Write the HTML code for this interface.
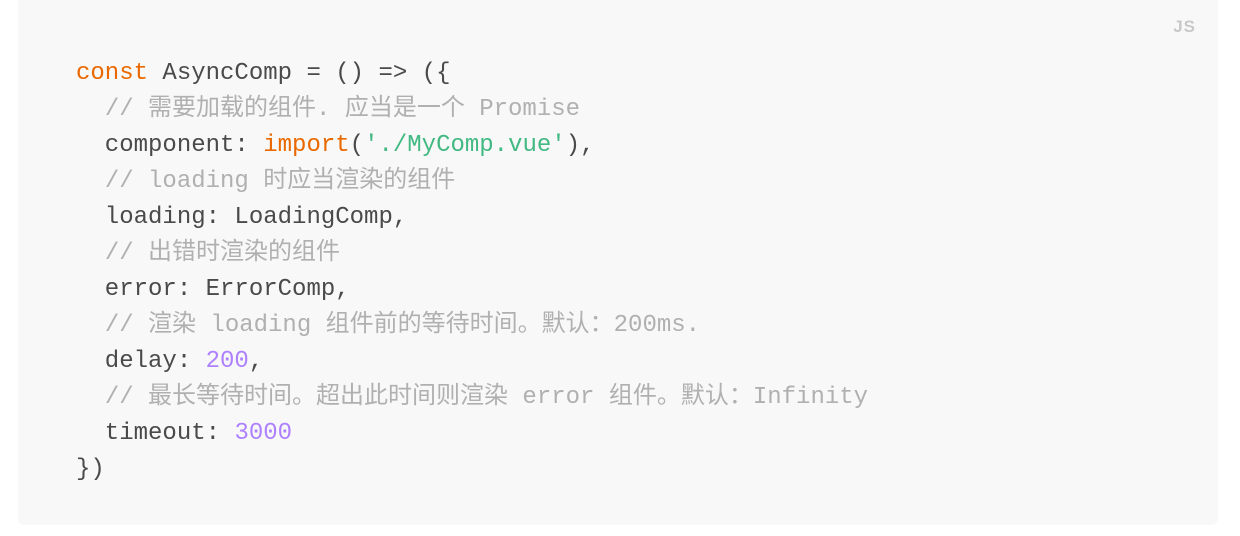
<!DOCTYPE html>
<html><head><meta charset="utf-8"><style>
html,body{margin:0;padding:0;background:#fff;width:1240px;height:536px;overflow:hidden}
.blk{position:absolute;left:18px;top:-10px;width:1200px;height:535px;background:#f8f8f8;border-radius:6px}
.js{position:absolute;right:22px;top:27px;font:bold 17px "Liberation Sans",sans-serif;color:#c8c8c8;letter-spacing:1px}
pre{position:absolute;left:76px;top:56px;margin:0;font:24px/36px "Liberation Mono","Noto Sans CJK SC",monospace;color:#4a4a4a}
.k{color:#e96900}.s{color:#42b983}.n{color:#ae81ff}.c{color:#b0b0b0}
</style></head><body>
<div class="blk"><div class="js">JS</div></div>
<pre><span class="k">const</span> AsyncComp = () =&gt; ({
  <span class="c">// 需要加载的组件. 应当是一个 Promise</span>
  component: <span class="k">import</span>(<span class="s">'./MyComp.vue'</span>),
  <span class="c">// loading 时应当渲染的组件</span>
  loading: LoadingComp,
  <span class="c">// 出错时渲染的组件</span>
  error: ErrorComp,
  <span class="c">// 渲染 loading 组件前的等待时间。默认：200ms.</span>
  delay: <span class="n">200</span>,
  <span class="c">// 最长等待时间。超出此时间则渲染 error 组件。默认：Infinity</span>
  timeout: <span class="n">3000</span>
})</pre>
</body></html>
